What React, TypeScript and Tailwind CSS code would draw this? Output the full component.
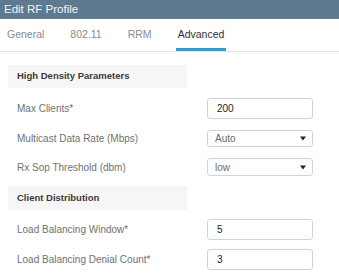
import React from "react";

const font = { fontFamily: '"Liberation Sans", Arial, sans-serif' };

function Section({ title, h }: { title: string; h: string }) {
  return (
    <div className={`ml-[8px] w-[179px] ${h} bg-[#f6f6f6] flex items-center pl-[9px] text-[9.5px] font-bold text-[#3a3a3a]`}>
      {title}
    </div>
  );
}

function InputRow({ label, value, mt }: { label: string; value: string; mt: string }) {
  return (
    <div className={`flex items-center ${mt}`}>
      <div className="w-[207px] pl-[17px] text-[10px] text-[#707070]">{label}</div>
      <div className="w-[106px] h-[21px] border border-[#c9d4dc] rounded-[3px] flex items-center pl-[9px] text-[10px] text-[#222]">
        {value}
      </div>
    </div>
  );
}

function SelectRow({ label, value, mt, h }: { label: string; value: string; mt: string; h: string }) {
  return (
    <div className={`flex items-center ${mt}`}>
      <div className="w-[207px] pl-[17px] text-[10px] text-[#707070]">{label}</div>
      <div className={`w-[106px] ${h} border border-[#c9d4dc] rounded-[3px] flex items-center justify-between pl-[7px] pr-[6px] text-[10px] text-[#6a6a6a]`}>
        <span>{value}</span>
        <svg width="6" height="5" viewBox="0 0 6 5">
          <polygon points="0,0.5 6,0.5 3,4.5" fill="#222" />
        </svg>
      </div>
    </div>
  );
}

export default function App() {
  return (
    <div className="w-[339px] h-[279px] bg-white overflow-hidden" style={font}>
      <div className="h-[19px] bg-[#5e7a90] flex items-center pl-[4px] text-[11.5px] text-[#f4f6f8]">
        Edit RF Profile
      </div>
      <div className="h-[33px] border-b border-[#e4e4e4] flex items-end pl-[5px] gap-[22px] text-[10.5px]">
        <div className="px-[2px] h-[29px] flex items-center text-[#8a8a8a] border-b-[3px] border-transparent">General</div>
        <div className="px-[2px] h-[29px] flex items-center text-[#8a8a8a] border-b-[3px] border-transparent">802.11</div>
        <div className="px-[2px] h-[29px] flex items-center text-[#8a8a8a] border-b-[3px] border-transparent">RRM</div>
        <div className="px-[2px] h-[29px] flex items-center text-[#333] border-b-[3px] border-[#2aa0d6]">Advanced</div>
      </div>
      <div className="pt-[13px]">
        <Section title="High Density Parameters" h="h-[23px]" />
        <InputRow label="Max Clients*" value="200" mt="mt-[10px]" />
        <SelectRow label="Multicast Data Rate (Mbps)" value="Auto" mt="mt-[11px]" h="h-[17px]" />
        <SelectRow label="Rx Sop Threshold (dbm)" value="low" mt="mt-[11px]" h="h-[18px]" />
        <div className="mt-[10px]">
          <Section title="Client Distribution" h="h-[24px]" />
        </div>
        <InputRow label="Load Balancing Window*" value="5" mt="mt-[9px]" />
        <InputRow label="Load Balancing Denial Count*" value="3" mt="mt-[9px]" />
      </div>
    </div>
  );
}
